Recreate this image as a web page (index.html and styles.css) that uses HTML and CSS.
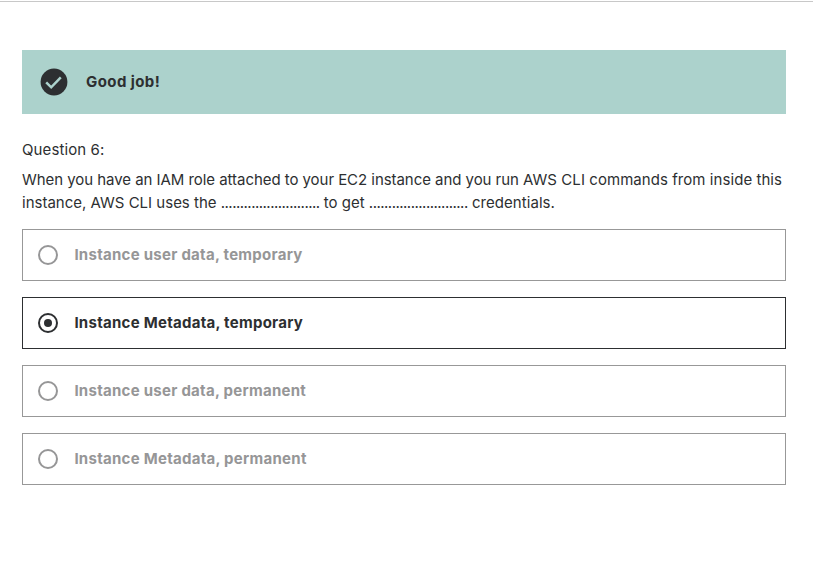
FILE: index.html
```html
<!DOCTYPE html>
<html lang="en">
<head>
<meta charset="utf-8">
<title>Quiz</title>
<link rel="stylesheet" href="styles.css">
</head>
<body>
<main class="quiz">
  <div class="banner">
    <svg class="check" viewBox="0 0 28 28"><circle cx="14" cy="14" r="13.4"/><path d="M6.2 14.3l5 5 9.6-10"/></svg>
    <strong class="message">Good job!</strong>
  </div>
  <div class="number">Question 6:</div>
  <div class="prompt">
    <div><span class="tight">When you have an IAM role attached to your EC2 instance and you run </span><span class="loose">AWS CLI commands from inside this</span></div>
    <div>instance, AWS CLI uses the <span class="dots">..........................</span> to get <span class="dots">..........................</span> <span class="loose">credentials.</span></div>
  </div>
  <ul class="answers">
    <li class="answer"><span class="radio"></span><span class="label">Instance user data, temporary</span></li>
    <li class="answer selected"><span class="radio"></span><span class="label">Instance Metadata, temporary</span></li>
    <li class="answer"><span class="radio"></span><span class="label">Instance user data, permanent</span></li>
    <li class="answer"><span class="radio"></span><span class="label">Instance Metadata, permanent</span></li>
  </ul>
</main>
</body>
</html>
```
FILE: styles.css
```css
* { box-sizing: border-box; }
body { margin: 0; background: #fff; color: #2d2f31; font: 15px/23px Inter, "Liberation Sans", sans-serif; }
.quiz { border-top: 1px solid #c8c8c8; margin-top: 1px; padding: 48px 27px 0 22px; }
.banner { height: 64px; background: #acd2cc; display: flex; align-items: center; padding-left: 18px; gap: 18px; }
.check { width: 28px; height: 28px; }
.check circle { fill: #2d2f31; }
.check path { fill: none; stroke: #acd2cc; stroke-width: 2.5; }
.message, .label { font-weight: 700; padding-bottom: 2px; }
.message { letter-spacing: 0.42px; }
.label { letter-spacing: 0.27px; padding-left: 0.4px; }
.number { margin-top: 24px; letter-spacing: 0.1px; }
.prompt { margin-top: 7px; white-space: nowrap; }
.tight { letter-spacing: -0.05px; }
.loose { letter-spacing: 0.06px; }
.dots { letter-spacing: -0.52px; }
.answers { list-style: none; margin: 15px 0 0; padding: 0; display: grid; gap: 16px; }
.answer { height: 52px; border: 1px solid #989898; color: #969697; display: flex; align-items: center; padding-left: 15px; gap: 16px; }
.radio { width: 20px; height: 20px; border: 2px solid #969697; border-radius: 50%; display: grid; place-items: center; }
.selected { color: #2d2f31; border-color: #2d2f31; }
.selected .radio { border-color: #2d2f31; }
.selected .radio::after { content: ""; width: 8px; height: 8px; border-radius: 50%; background: #2d2f31; }
```
